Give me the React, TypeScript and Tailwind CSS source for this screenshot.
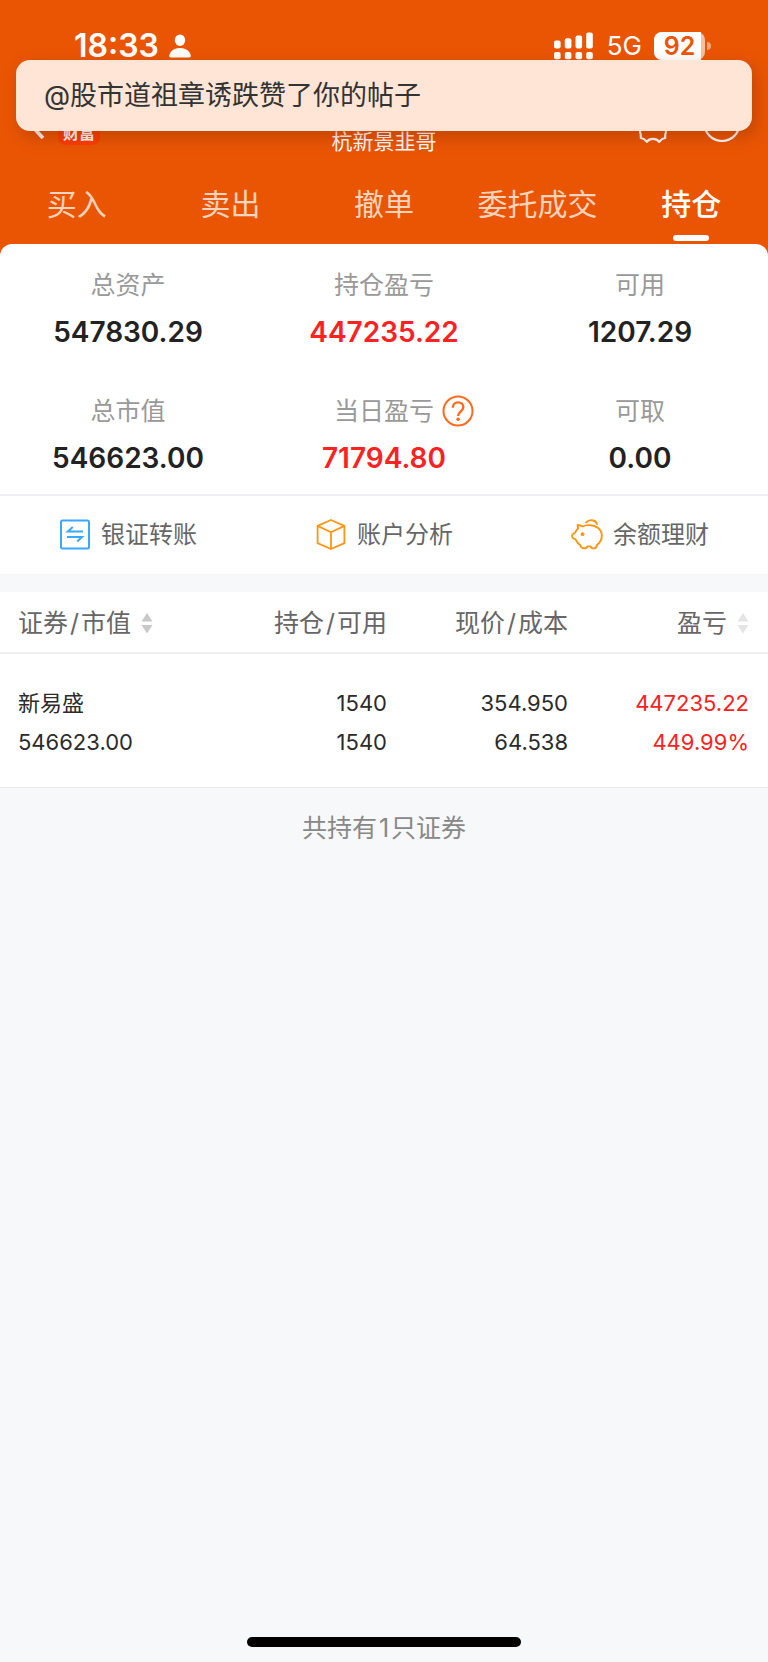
import type { ReactNode } from "react";
import clsx from "clsx";

const tabs = ["买入", "卖出", "撤单", "委托成交", "持仓"];
const activeTab = "持仓";

type Metric = { label: string; value: string; up?: boolean; help?: boolean };

const metrics: Metric[] = [
  { label: "总资产", value: "547830.29" },
  { label: "持仓盈亏", value: "447235.22", up: true },
  { label: "可用", value: "1207.29" },
  { label: "总市值", value: "546623.00" },
  { label: "当日盈亏", value: "71794.80", up: true, help: true },
  { label: "可取", value: "0.00" },
];

const holdings = [
  {
    name: "新易盛",
    marketValue: "546623.00",
    amount: "1540",
    available: "1540",
    price: "354.950",
    cost: "64.538",
    profit: "447235.22",
    profitRate: "449.99%",
  },
];

function StatusBar() {
  return (
    <div className="flex h-[92px] items-center justify-between pr-[57px] pl-[74px] text-white">
      <div className="flex items-center gap-2.5">
        <span className="text-[32px] leading-10 font-semibold">18:33</span>
        <svg viewBox="0 0 22 24" className="h-6 w-[22px]" fill="currentColor" aria-hidden="true">
          <ellipse cx="11" cy="6.2" rx="5.2" ry="5.8" />
          <path d="M1.8 23.4C.6 23.4 0 22.7.2 21.5 1.1 17 5.4 14 11 14s9.9 3 10.8 7.5c.2 1.2-.4 1.9-1.6 1.9z" />
        </svg>
      </div>
      <div className="flex items-center">
        <svg viewBox="0 0 39 28" className="h-7 w-[39px]" fill="currentColor" aria-hidden="true">
          <rect x="0" y="8.5" width="6.6" height="8" rx="2" />
          <rect x="10.8" y="6.2" width="6.6" height="10.3" rx="2" />
          <rect x="21.5" y="3.5" width="6.6" height="13" rx="2" />
          <rect x="32.2" y="0.5" width="6.6" height="16" rx="2" />
          <rect x="0" y="20" width="6.6" height="7.2" rx="2" />
          <rect x="10.8" y="20" width="6.6" height="7.2" rx="2" />
          <rect x="21.5" y="20" width="6.6" height="7.2" rx="2" />
          <rect x="32.2" y="20" width="6.6" height="7.2" rx="2" />
        </svg>
        <span className="ml-3.5 text-[26px] leading-8">5G</span>
        <div className="ml-3 flex items-center gap-0.5">
          <div className="flex h-7 w-[51px] rounded-lg bg-[#f7bf9f]">
            <span className="w-[47px] rounded-l-lg bg-white pl-1 text-center text-[25px] leading-7 font-semibold text-[#ea5504]">
              92
            </span>
          </div>
          <div className="h-2 w-1 rounded-r-full bg-[#f3a57a]" />
        </div>
      </div>
    </div>
  );
}

function NavBar() {
  return (
    <div className="grid h-16 grid-cols-[1fr_auto_1fr] items-center text-white">
      <div className="flex h-full items-center gap-3 pl-7">
        <button type="button" aria-label="返回">
          <svg viewBox="0 0 18 32" className="h-8 w-[18px]" fill="none" stroke="currentColor" strokeWidth="3.6" aria-hidden="true">
            <path d="M15 2 2 16l13 14" />
          </svg>
        </button>
        <span className="mb-[11px] h-5 self-end rounded-lg bg-[#fb3c00] px-[5px] text-base leading-4 font-bold">财富</span>
      </div>
      <div className="self-end text-[21px] leading-7">杭新景韭哥</div>
      <div className="flex items-center justify-end gap-9 pr-[27px]">
        <button type="button" aria-label="设置">
          <svg viewBox="0 0 28 38" className="h-[38px] w-7" fill="none" stroke="currentColor" strokeWidth="2.2" strokeLinejoin="round" aria-hidden="true">
            <path d="M2 7 7.5 1.5Q14 7 20.5 1.5L26 7q-1 4 1 6v14q-1 2-.8 6-3.5.5-6 3.8-2-3-6.2-3-4.2 0-6.2 3-2.5-3.3-6-3.8.2-4-.8-6V13q2-2 1-6z" />
            <circle cx="14" cy="19" r="5" />
          </svg>
        </button>
        <button type="button" aria-label="更多">
          <svg viewBox="0 0 38 38" className="size-[38px]" fill="none" stroke="currentColor" strokeWidth="2.2" aria-hidden="true">
            <circle cx="19" cy="18.5" r="17.5" />
          </svg>
        </button>
      </div>
    </div>
  );
}

function Tabs() {
  return (
    <nav className="grid grid-cols-5">
      {tabs.map((tab) => {
        const active = tab === activeTab;
        return (
          <a
            key={tab}
            href="#"
            aria-current={active ? "page" : undefined}
            className={clsx(
              "flex h-[88px] flex-col items-center justify-between pt-7 pb-[3px] text-[30px] leading-10",
              active ? "font-medium text-white" : "text-[#fcd3bd]",
            )}
          >
            {tab}
            {active && <span className="h-1.5 w-9 rounded-full bg-white" />}
          </a>
        );
      })}
    </nav>
  );
}

function Summary() {
  return (
    <dl className="grid grid-cols-3 gap-y-[42px] pt-6 pb-4">
      {metrics.map((m) => (
        <div key={m.label}>
          <dt className="grid h-[34px] grid-cols-[1fr_auto_1fr] items-center text-[25px] leading-8 text-[#999]">
            <span className="col-start-2">{m.label}</span>
            {m.help && (
              <button type="button" aria-label="当日盈亏说明" className="ml-2 size-8 text-[#ff6a1c]">
                <svg viewBox="0 0 32 32" fill="none" stroke="currentColor" strokeWidth="2" aria-hidden="true">
                  <circle cx="16" cy="16" r="14.5" />
                  <path d="M10.8 12.8c0-3.2 2.2-5.4 5.3-5.4 3 0 5.2 2 5.2 4.7 0 2.2-1.3 3.3-2.7 4.5-1.6 1.3-2.5 2.3-2.5 4.4" strokeWidth="2.4" />
                  <circle cx="16.1" cy="24.3" r="1.8" fill="currentColor" stroke="none" />
                </svg>
              </button>
            )}
          </dt>
          <dd className={clsx("mt-2.5 text-center text-[28px] leading-10 font-semibold", m.up ? "text-[#fa2222]" : "text-[#222]")}>
            {m.value}
          </dd>
        </div>
      ))}
    </dl>
  );
}

function Action({ label, children }: { label: string; children: ReactNode }) {
  return (
    <button type="button" className="flex items-center justify-center gap-2.5 text-2xl leading-8 text-[#666]">
      {children}
      {label}
    </button>
  );
}

function Actions() {
  return (
    <div className="grid h-20 grid-cols-3 border-t-2 border-[#efeff3] bg-white">
      <Action label="银证转账">
        <svg viewBox="0 0 32 32" className="size-8 text-[#39a9fd]" fill="none" stroke="currentColor" strokeWidth="2" aria-hidden="true">
          <rect x="2" y="1.5" width="28" height="28" rx="1.5" />
          <path d="M24 12.5H8.8l5-4.5M8 18h15l-4.8 4.500" />
        </svg>
      </Action>
      <Action label="账户分析">
        <svg viewBox="0 0 32 32" className="size-8 text-[#ff9512]" fill="none" stroke="currentColor" strokeWidth="1.8" strokeLinejoin="round" aria-hidden="true">
          <path d="M16 1 29.4 6.9v17.2L16 30 2.6 24.100V6.900z" />
          <path d="M2.600 6.900 16 13.200l13.400-6.300M16 13.200V30" />
        </svg>
      </Action>
      <Action label="余额理财">
        <svg viewBox="0 1 32 32" className="size-8 text-[#ff9512]" fill="none" stroke="currentColor" strokeWidth="1.9" strokeLinecap="round" strokeLinejoin="round" aria-hidden="true">
          <path d="M6.600 7c1.900 0 3.700.7 4.800 1.500 2-1.100 4.300-1.400 6.600-1.400 7.300 0 12.800 4.200 12.800 10.400 0 4.400-2 7.500-4.800 9.300-.3 2.700-1.200 3.600-3.300 3.600-1.800 0-2.700-.6-3.100-2h-3.200c-.5 1.400-1.500 2-3.300 2-2.300 0-3.300-1-3.800-3.300-2.400-1.200-3.600-3.300-4.600-5.500L1.900 20c-.6-.5-.8-1.200-.8-2.200 0-1.400.6-2.100 1.800-2.400.8-.2 1.300-.6 1.700-1.500.6-1.300 1.500-2.500 2.500-3.300z" />
          <path d="M15.200 4.400C18.200 1 24.600 1.400 26 6" />
          <circle cx="11.600" cy="16.200" r="1.900" fill="currentColor" stroke="none" />
        </svg>
      </Action>
    </div>
  );
}

function SortIcon({ className }: { className: string }) {
  return (
    <svg viewBox="0 0 12 22" className={clsx("h-[22px] w-3", className)} fill="currentColor" aria-hidden="true">
      <path d="M6 1l5.500 8.500H.5zM6 21.500.5 13h11z" />
    </svg>
  );
}

function PairLabel({ first, second }: { first: string; second: string }) {
  return (
    <span>
      {first}
      <span className="mx-0.5">/</span>
      {second}
    </span>
  );
}

function Holdings() {
  return (
    <div className="bg-white">
      <table className="w-full table-fixed border-collapse">
        <thead>
          <tr className="h-[61px] border-b-2 border-[#efeff1] text-[25px] leading-8 text-[#666] [&>th]:pt-0.5 [&>th]:font-normal">
            <th className="pl-[18px] text-left">
              <button type="button" className="flex items-center gap-2.5">
                <PairLabel first="证券" second="市值" />
                <SortIcon className="text-[#c8c8c8]" />
              </button>
            </th>
            <th className="w-[181px] text-right">
              <PairLabel first="持仓" second="可用" />
            </th>
            <th className="w-[181px] text-right">
              <PairLabel first="现价" second="成本" />
            </th>
            <th className="w-[200px] pr-[19px]">
              <button type="button" className="ml-auto flex items-center gap-2.5">
                盈亏
                <SortIcon className="text-[#e4e4e4]" />
              </button>
            </th>
          </tr>
        </thead>
        <tbody>
          {holdings.map((h) => (
            <tr
              key={h.name}
              className="border-b border-[#ebebed] text-right text-[22px] leading-[39px] text-[#2b2b2b] [&>td]:pt-[30px] [&>td]:pb-[25px]"
            >
              <td className="pl-[18px] text-left">
                <div>{h.name}</div>
                <div>{h.marketValue}</div>
              </td>
              <td>
                <div>{h.amount}</div>
                <div>{h.available}</div>
              </td>
              <td>
                <div>{h.price}</div>
                <div>{h.cost}</div>
              </td>
              <td className="pr-[19px] text-[#fa2222]">
                <div>{h.profit}</div>
                <div>{h.profitRate}</div>
              </td>
            </tr>
          ))}
        </tbody>
      </table>
    </div>
  );
}

export default function App() {
  return (
    <div className="relative flex min-h-screen flex-col bg-[#f7f8fa] font-['Inter','Noto_Sans_CJK_SC',sans-serif]">
      <div className="bg-[#ea5504]">
        <header>
          <StatusBar />
          <NavBar />
          <Tabs />
        </header>
        <section className="rounded-t-xl bg-white">
          <Summary />
        </section>
      </div>

      <Actions />
      <main className="mt-[18px]">
        <Holdings />
        <p className="mt-6 text-center text-[25px] leading-8 text-[#888]">
          共持有<span className="mx-0.5">{holdings.length}</span>只证券
        </p>
      </main>

      <div className="mt-auto flex justify-center pb-[15px]">
        <div className="h-2.5 w-[274px] rounded-full bg-black" />
      </div>

      {/* push notification, slides over the nav bar */}
      <div
        role="status"
        className="absolute inset-x-4 top-[60px] flex h-[71px] items-center rounded-[14px] bg-[#fee5d5] pl-7 text-[27px] leading-8 text-[#333] shadow-[4px_6px_16px_rgba(120,40,0,0.35)]"
      >
        @股市道祖章诱跌赞了你的帖子
      </div>
    </div>
  );
}
